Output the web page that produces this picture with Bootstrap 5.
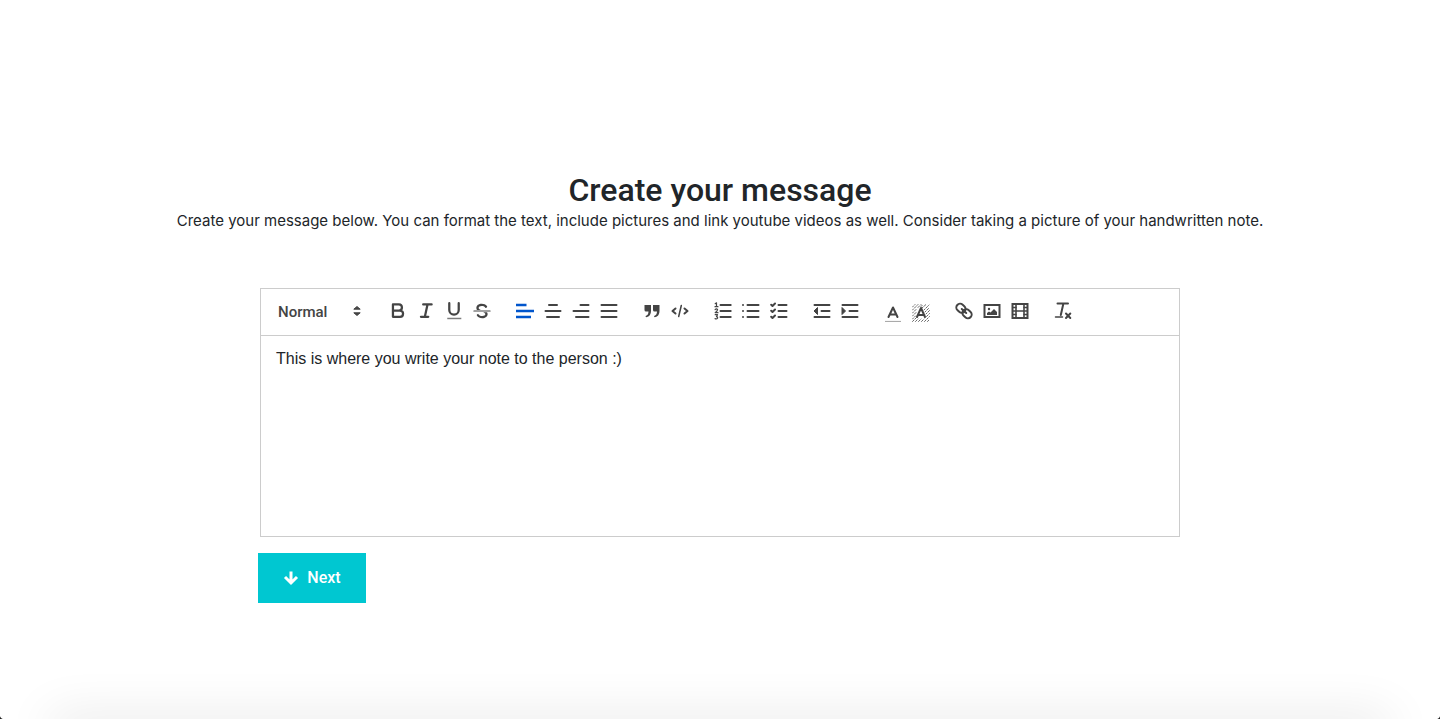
<!DOCTYPE html>
<html lang="en">
<head>
<meta charset="utf-8">
<meta name="viewport" content="width=device-width, initial-scale=1">
<title>Create your message</title>
<link href="https://cdn.jsdelivr.net/npm/bootstrap@5.3.0/dist/css/bootstrap.min.css" rel="stylesheet">
<style>
  body { font-family: Roboto, sans-serif; color: #212529; }
  .page { padding-top: 54px; overflow: hidden; }
  .page-title { font-size: 32px; line-height: 38px; font-weight: 500; color: #212529; }
  .intro { font-family: Inter, sans-serif; font-size: 15px; line-height: 24px; }
  .composer { max-width: 924px; margin-top: 55px; }
  .editor { margin: 0 2px 16px; border: 1px solid #ccc; font-family: "Liberation Sans", sans-serif; }
  .tools { padding: 10px 8px 11px; gap: 0 15px; border-bottom: 1px solid #ccc; }
  .tool { width: 28px; height: 24px; padding: 3px 5px; border: 0; background: none; color: #444; display: block; }
  .tool svg { display: block; width: 18px; height: 18px; }
  .tool:hover, .tool.active { color: #0055cc; }
  .lowered { padding-top: 2px; margin-bottom: -2px; }
  .format { position: relative; width: 100px; color: #444; }
  .format select { appearance: none; width: 100%; height: 24px; margin-top: 1px; padding: 0 9px; border: 0; background: none; color: inherit; font-family: Roboto, sans-serif; font-size: 15px; font-weight: 500; line-height: 24px; }
  .format svg { position: absolute; right: 3px; top: 3px; width: 18px; height: 18px; pointer-events: none; }
  .note { display: block; width: 100%; height: 200px; padding: 11px 15px; border: 0; outline: 0; resize: none; font-size: 16px; line-height: 23px; color: #212529; }
  .next { width: 108px; height: 50px; border-radius: 0; border: 0; background: #00c7d1; color: #fff; font-size: 16px; font-weight: 500; }
  .next:hover { background: #00b3bc; color: #fff; }
  .s, .t { fill: none; stroke: currentColor; stroke-linecap: round; stroke-linejoin: round; stroke-width: 2; }
  .t { stroke-width: 1; }
  .f { fill: currentColor; }
  .shade { position: absolute; left: 50px; right: 50px; bottom: -20px; height: 20px; box-shadow: 0 0 50px rgba(0,0,0,.14); pointer-events: none; }
  .corner { position: absolute; bottom: 0; width: 5px; height: 5px; }
  .corner-left { left: 0; background: radial-gradient(circle at 100% 0, transparent 5px, #222 6px); }
  .corner-right { right: 0; background: radial-gradient(circle at 0 0, transparent 5px, #222 6px); }
</style>
</head>
<body>
<main class="page position-relative min-vh-100 d-flex flex-column justify-content-center align-items-center">
  <h1 class="page-title text-center mb-0">Create your message</h1>
  <p class="intro text-center mb-0">Create your message below. You can format the text, include pictures and link youtube videos as well. Consider taking a picture of your handwritten note.</p>
  <form class="composer w-100" onsubmit="return false">
    <div class="editor">
      <div class="tools d-flex flex-wrap" role="toolbar" aria-label="Formatting">
        <div class="format">
          <select aria-label="Text style"><option>Normal</option><option>Heading 1</option><option>Heading 2</option></select>
          <svg viewBox="0 0 18 18"><path class="f" stroke="currentColor" stroke-linejoin="round" d="M5.8 10.8L9 13.5L12.2 10.8zM5.8 7.2L9 4.5L12.2 7.2z"/></svg>
        </div>
        <div class="d-flex">
          <button type="button" class="tool" aria-label="Bold"><svg viewBox="1 1 16 16"><path class="s" d="M4.5 3.2H9.8A2.8 2.8 0 0 1 12.5 6A2.8 2.8 0 0 1 9.8 8.6H4.5zM4.5 8.6H10.8A2.8 2.8 0 0 1 13.5 11.4A2.8 2.8 0 0 1 10.8 14.2H4.5z"/></svg></button>
          <button type="button" class="tool" aria-label="Italic"><svg viewBox="1 1 16 16"><path class="s" d="M6.5 3.2H14M4.5 14.2H11M8 14L10.3 3.4"/></svg></button>
          <button type="button" class="tool" aria-label="Underline"><svg viewBox="1 1 16 16"><path class="s" d="M4.8 2V8A4.2 4.2 0 0 0 13.2 8V2"/><rect class="f" x="3" y="15" width="12.5" height="1.3" opacity=".7"/></svg></button>
          <button type="button" class="tool" aria-label="Strikethrough"><svg viewBox="1 1 16 16"><path class="t" d="M1.8 9H16.2"/><path class="f" d="M8.007 8C6.605 7.527 6 7.033 6 6.25C6 5.208 7.04 4.5 8.75 4.5C10 4.5 11.1 4.9 11.8 5.8A1 1 0 0 0 13.4 4.6C12.3 3.2 10.7 2.5 8.75 2.5C6.1 2.5 4 3.9 4 6.25C4 7 4.2 7.5 4.5 8zM9.99 10C11.4 10.5 12 11 12 11.75C12 12.8 10.96 13.5 9.25 13.5C7.8 13.5 6.7 13 6.1 12.1A1 1 0 0 0 4.4 13.1C5.4 14.7 7.1 15.5 9.25 15.5C11.9 15.5 14 14.1 14 11.75C14 11 13.8 10.5 13.5 10z"/></svg></button>
        </div>
        <div class="d-flex">
          <button type="button" class="tool active" aria-label="Align left" aria-pressed="true"><svg viewBox="0 0 18 18"><path class="s" style="stroke-width:2.4;stroke-linecap:butt" d="M0 9H18M0 3H10.5M0 15H15"/></svg></button>
          <button type="button" class="tool" aria-label="Align center"><svg viewBox="0 0 18 18"><path class="s" d="M1.5 9H16.5M5 3H13M3 15H15"/></svg></button>
          <button type="button" class="tool" aria-label="Align right"><svg viewBox="0 0 18 18"><path class="s" d="M1.5 9H16.5M8.5 3H16.5M4 15H16.5"/></svg></button>
          <button type="button" class="tool" aria-label="Justify"><svg viewBox="0 0 18 18"><path class="s" d="M1.5 9H16.5M1.5 3H16.5M1.5 15H16.5"/></svg></button>
        </div>
        <div class="d-flex">
          <button type="button" class="tool" aria-label="Quote"><svg viewBox="0 0 18 18"><path class="f" d="M1.5 3H8V9Q8 14.5 3.3 15.2Q2.2 15 2.7 14Q5.5 13 5.5 9.5H3Q1.5 9.5 1.5 8zM10 3H16.5V9Q16.5 14.5 11.8 15.2Q10.7 15 11.2 14Q14 13 14 9.5H11.5Q10 9.5 10 8z"/></svg></button>
          <button type="button" class="tool" aria-label="Code"><svg viewBox="0 0 18 18"><path class="s" d="M4.5 6.5L1.5 9L4.5 11.5M13.5 6.5L16.5 9L13.5 11.5"/><path class="s" style="stroke-width:1.5" d="M10.3 3.5L7.7 14.5"/></svg></button>
        </div>
        <div class="d-flex">
          <button type="button" class="tool" aria-label="Ordered list"><svg viewBox="0 0 18 18"><path class="s" d="M6.5 3H16.7M6.5 9H16.7M6.5 15H16.7"/><path class="t" style="stroke-width:1.2" d="M1.2 1.7L2.5 .8V4.5M1 4.7H4M1.1 7.6Q2.5 6.3 3.5 7.5Q3.8 8.5 1.2 10.7H4M1.2 12.7H3.5L2.5 14.6Q4 15 3.5 16.3Q2.6 17.3 1.1 16.6"/></svg></button>
          <button type="button" class="tool" aria-label="Bullet list"><svg viewBox="0 0 18 18"><path class="s" d="M5.5 3H16.5M5.5 9H16.5M5.5 15H16.5M1 3H1.01M1 9H1.01M1 15H1.01"/></svg></button>
          <button type="button" class="tool" aria-label="Check list"><svg viewBox="0 0 18 18"><path class="s" d="M8.5 3H16.5M8.5 9H16.5M8.5 15H16.5M1.2 2.7L2.5 4L5 1.5M1.2 8.7L2.5 10L5 7.5M1.2 14.7L2.5 16L5 13.5"/></svg></button>
        </div>
        <div class="d-flex">
          <button type="button" class="tool" aria-label="Decrease indent"><svg viewBox="0 0 18 18"><path class="s" d="M1.5 3H16.5M8.5 9H16.5M1.5 15H16.5"/><path class="f" stroke="currentColor" stroke-linejoin="round" d="M4.5 5.5V12.5L1 9z"/></svg></button>
          <button type="button" class="tool" aria-label="Increase indent"><svg viewBox="0 0 18 18"><path class="s" d="M1.5 3H16.5M8.5 9H16.5M1.5 15H16.5"/><path class="f" stroke="currentColor" stroke-linejoin="round" d="M1 5.5V12.5L4.5 9z"/></svg></button>
        </div>
        <div class="d-flex lowered">
          <button type="button" class="tool" aria-label="Text color"><svg viewBox="0 0 18 18"><path d="M1 17.5H17" stroke="#aaa" stroke-width="1.2"/><path class="s" d="M4.5 13L9 3.5L13.5 13M6.2 10.5H11.8"/></svg></button>
          <button type="button" class="tool" aria-label="Highlight color"><svg viewBox="0 0 18 18"><path class="t" stroke-dasharray="1.7 1.5" d="M.5 3L3 .5M.5 6L6 .5M.5 9L4.5 5M6 3.5L9 .5M.5 12L4 8.5M.5 15L3.5 12M.5 17.5L4 14M3.5 17.5L6 15M6.5 17.5L9 15M9.5 17.5L12 15M12.5 17.5L17.5 12.5M15.5 17.5L17.5 15.5M14.5 12.5L17.5 9.5M14 10L17.5 6.5M13 8L17.5 3.5M12 6L17 1M10 4L14 .5M9 2.5L11 .5" opacity=".8"/><path class="s" d="M5 13L9 4L13 13M6.5 11H11.5"/></svg></button>
        </div>
        <div class="d-flex">
          <button type="button" class="tool" aria-label="Link"><svg viewBox="0 0 18 18"><g transform="rotate(42 9 9)"><rect class="s" x="0" y="5.2" width="9.8" height="7.6" rx="3.8"/><rect class="s" x="8.2" y="5.2" width="9.8" height="7.6" rx="3.8"/><path class="s" d="M6 9H12"/></g></svg></button>
          <button type="button" class="tool" aria-label="Image"><svg viewBox="0 0 18 18"><path class="s" style="stroke-linejoin:miter" d="M1.5 3H16.5V15H1.5z"/><circle class="f" cx="6" cy="7" r="1.2"/><path class="f" d="M4 13V11L6 9.5L7.5 10.5L11 7L14 10V13z"/></svg></button>
          <button type="button" class="tool" aria-label="Video"><svg viewBox="0 0 18 18"><path class="s" style="stroke-linejoin:miter" d="M1.5 2H16.5V16H1.5z"/><path class="s" style="stroke-width:1.6" d="M5 2V16M13 2V16M5 9H13"/><path class="t" style="stroke-width:1.3" d="M2 5.5H5M2 9H5M2 12.5H5M13 5.5H16M13 9H16M13 12.5H16"/></svg></button>
        </div>
        <div class="d-flex">
          <button type="button" class="tool" aria-label="Clear formatting"><svg viewBox="0 0 18 18"><path class="s" d="M3.5 1.5H14M9.4 1.5L6.8 13M12 11.5L16.3 16M16.3 11.5L12 16"/><path class="t" style="stroke-width:1.5" d="M1.5 15H8.5"/></svg></button>
        </div>
      </div>
      <textarea class="note" aria-label="Message" spellcheck="false">This is where you write your note to the person :)</textarea>
    </div>
    <button type="submit" class="btn next d-flex align-items-center justify-content-center gap-2 p-0">
      <svg width="16" height="16" viewBox="0 0 16 16" aria-hidden="true"><path d="M8 1.5V13M2 7L8 13L14 7" fill="none" stroke="#fff" stroke-width="3"/></svg>
      Next
    </button>
  </form>
  <div class="shade"></div>
  <div class="corner corner-left"></div>
  <div class="corner corner-right"></div>
</main>
<script src="https://cdn.jsdelivr.net/npm/bootstrap@5.3.0/dist/js/bootstrap.bundle.min.js"></script>
</body>
</html>
